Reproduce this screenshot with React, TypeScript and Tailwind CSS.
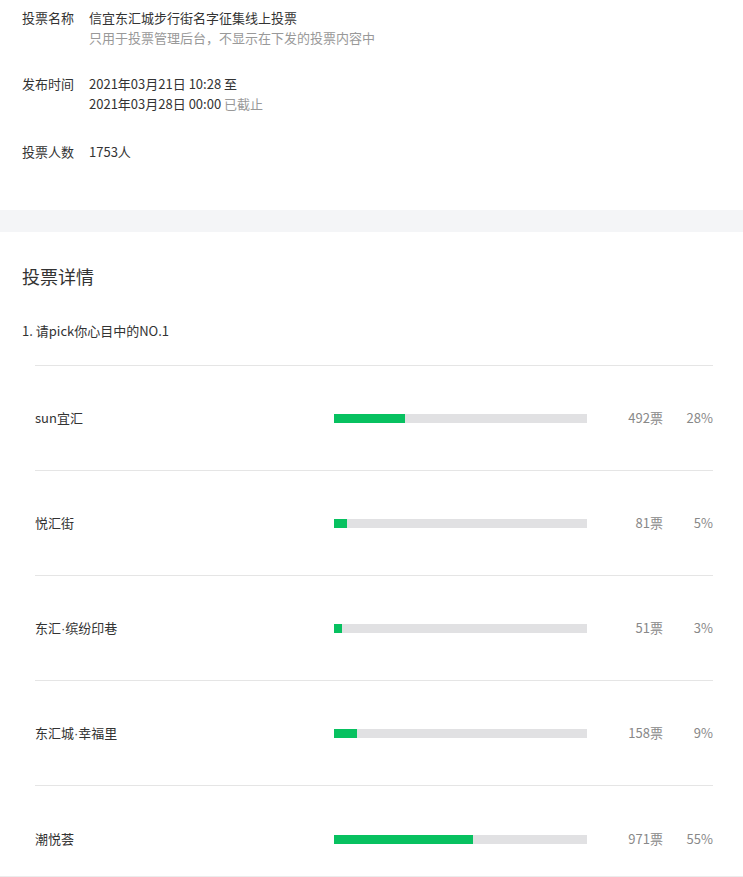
const options = [
  { name: "sun宜汇", votes: 492, percent: 28 },
  { name: "悦汇街", votes: 81, percent: 5 },
  { name: "东汇·缤纷印巷", votes: 51, percent: 3 },
  { name: "东汇城·幸福里", votes: 158, percent: 9 },
  { name: "潮悦荟", votes: 971, percent: 55 },
];

const font = { fontFamily: '"Noto Sans CJK SC", "Liberation Sans", sans-serif' };

// the CJK font draws "·" full width; the reference has a narrow dot
function Name({ text }: { text: string }) {
  const parts = text.split("·");
  return (
    <>
      {parts.map((p, i) => (
        <span key={i}>
          {i > 0 && <span className="font-['Liberation_Sans']">·</span>}
          {p}
        </span>
      ))}
    </>
  );
}

export default function App() {
  return (
    <div className="min-h-screen bg-white text-[13px] text-[#333]" style={font}>
      {/* basic info */}
      <div className="px-[22px] pt-[8px] pb-[48px] leading-[20px]">
        <div className="flex">
          <div className="w-[67px] shrink-0">投票名称</div>
          <div>
            <div>信宜东汇城步行街名字征集线上投票</div>
            <div className="text-[#999]">只用于投票管理后台，不显示在下发的投票内容中</div>
          </div>
        </div>
        <div className="mt-[26px] flex">
          <div className="w-[67px] shrink-0">发布时间</div>
          <div>
            <div>2021年03月21日 10:28 至</div>
            <div>
              2021年03月28日 00:00 <span className="text-[#999]">已截止</span>
            </div>
          </div>
        </div>
        <div className="mt-[28px] flex">
          <div className="w-[67px] shrink-0">投票人数</div>
          <div>1753人</div>
        </div>
      </div>

      <div className="h-[22px] bg-[#f4f5f7]" />

      {/* details */}
      <div className="pt-[32px]">
        <h2 className="px-[22px] text-[18px] leading-[24px]">投票详情</h2>
        <div className="mt-[33px] px-[22px] leading-[20px]">1. 请pick你心目中的NO.1</div>
        <div className="mt-[24px] ml-[35px] mr-[30px] border-t border-[#e5e5e5]">
          {options.map((o, i) => (
            <div
              key={o.name}
              className={
                i === options.length - 1
                  ? "flex h-[90px] items-start pt-[43px]"
                  : "flex h-[105px] items-center border-b border-[#e5e5e5]"
              }
            >
              <div className="flex-1 leading-[20px]">
                <Name text={o.name} />
              </div>
              <div className={i === options.length - 1 ? "mt-[6px] h-[9px] w-[253px] bg-[#e1e1e3]" : "h-[9px] w-[253px] bg-[#e1e1e3]"}>
                <div className="h-full bg-[#07c160]" style={{ width: `${o.percent}%` }} />
              </div>
              <div className="w-[76px] text-right leading-[20px] text-[#888]">{o.votes}票</div>
              <div className="w-[50px] text-right leading-[20px] text-[#888]">{o.percent}%</div>
            </div>
          ))}
        </div>
      </div>
      <div className="h-[20px] border-t border-[#ececec] bg-[#f4f5f7]" />
    </div>
  );
}
